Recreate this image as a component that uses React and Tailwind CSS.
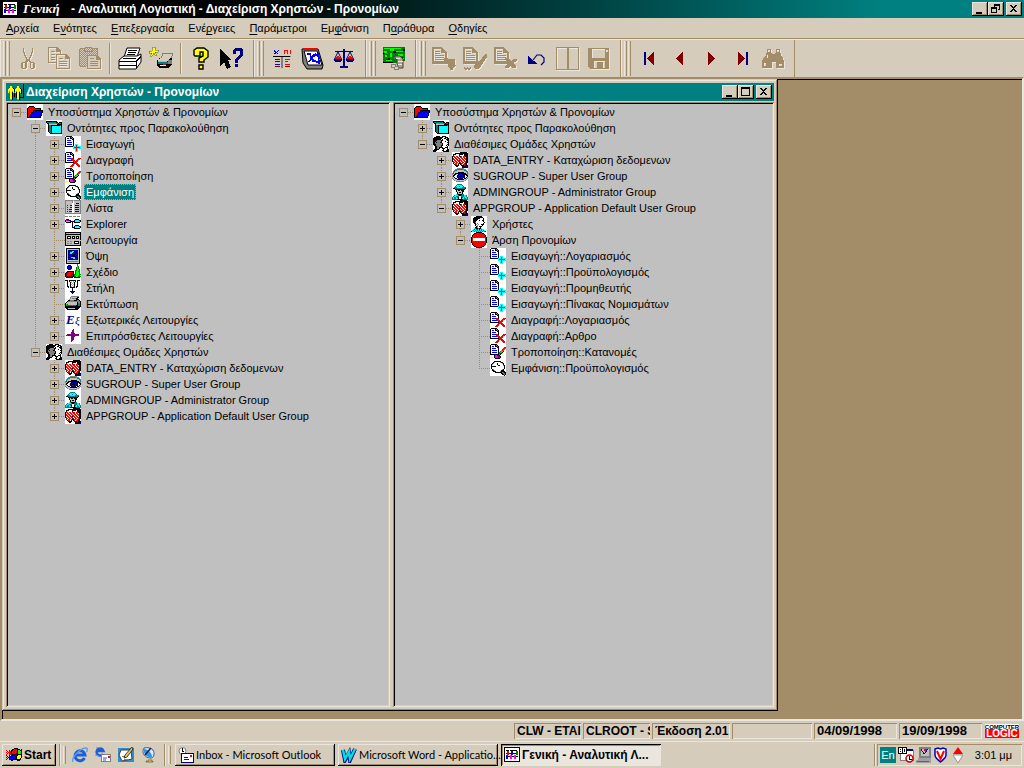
import clsx from 'clsx';

const COLORS = {
  k: '#000000', w: '#ffffff', r: '#ff0000', b: '#0000ff', n: '#000080', c: '#00ffff', t: '#008080',
  g: '#808080', s: '#c0c0c0', y: '#ffff00', m: '#ff00ff', p: '#800080', e: '#008000', l: '#00ff00',
  d: '#800000', o: '#a28d68', i: '#eae6dd',
};

// Draws a small bitmap, one character per pixel
const Pixels = ({ rows, x = 0, y = 0 }) => (
  <g>
    {rows.map((row, ry) =>
      [...row.matchAll(/([a-z])\1*/g)].map((run) => (
        <rect key={ry + '-' + run.index} x={x + run.index} y={y + ry} width={run[0].length} height="1" fill={COLORS[run[1]]} />
      ))
    )}
  </g>
);

const Svg16 = ({ children, bg }) => (
  <svg width="16" height="16" viewBox="0 0 16 16" shapeRendering="crispEdges" className="block shrink-0" aria-hidden="true">
    {bg && <rect width="16" height="16" fill={bg} />}
    {children}
  </svg>
);

const Svg24 = ({ children }) => (
  <svg width="24" height="24" viewBox="0 0 24 24" shapeRendering="crispEdges" className="block" aria-hidden="true">
    {children}
  </svg>
);

const PAGE = [
  '.kkkkkk.',
  'kwwwwkgk',
  'kwbbwkkgk',
  'kwwwwwwkk',
  'kwbbbbwwk',
  'kwwwwwwwk',
  'kwbbbbbwk',
  'kwwwwwwwk',
  'kwbbbbbwk',
  'kwwwwwwwk',
  'kkkkkkkkk',
];

const BITMAPS = {
  folder: [
    '................',
    '................',
    '..kkkkk.........',
    '.krrrrrk........',
    'krrrrrrrkkkkkk..',
    'krrrrrrrrrrrrk..',
    'krrrrrkkkkkkkkkk',
    'krrrrrkbbbbbbbbk',
    'krrrkkbbbbbbbbbk',
    'krrrkbbbbbbbbbk.',
    'krrkbbbbbbbbbbk.',
    'krrkbbbbbbbbbbk.',
    'krkbbbbbbbbbbk..',
    'kkkkkkkkkkkkkk..',
    '................',
    '................',
  ],
  box: [
    '................',
    'kkkkkkkkkkk.....',
    'ktttttttttkk.kkk',
    '.kkgggggggttkttk',
    '..ksssssssskkkkk',
    '..kttkkkkkkkkktk',
    '..kttkccccccccck',
    '..kttkccccccccck',
    '..kttkccccccccck',
    '..kttkccccccccck',
    '..kttkccccccccck',
    '..kttkccccccccck',
    '...ktkccccccccck',
    '....kkkkkkkkkkkk',
    '................',
    '................',
  ],
  list: [
    'ggggggggsggggggg',
    'gssssssgwssssssg',
    'gssssssgwssssssg',
    'gsssssswwssnnnsg',
    'gsssssswwssssssg',
    'gspssbbwwsnnbnsg',
    'gsssssswwssssssg',
    'gspssbbwwsnnbnsg',
    'gsssssswwssssssg',
    'gspsbbbwwsnnnnsg',
    'gsssssswwssssssg',
    'gspsbbbwwsnnbnsg',
    'gsssssswwssssssg',
    'gggggggggggggggg',
    '................',
    '................',
  ],
  explorer: [
    'ggg.ggg.ggg.ggg.',
    '................',
    '................',
    '.kkk......kkkk..',
    'kmppkk...kcccckk',
    'kssssknnnkssssck',
    '.kkkkk.n.kkkkkk.',
    '.......n........',
    '.......n........',
    '.......n..kkkk..',
    '.......n.kcccckk',
    '.......nnkssssck',
    '.........kkkkkk.',
    '................',
    '................',
    '................',
  ],
  dialog: [
    'kkkkkkkkkkkkkkkk',
    'kcccccccccccccck',
    'kkkkkkkkkkkkkkkk',
    'kssssssssssssssk',
    'kskkkkskkkskkksk',
    'kskwwkskwkskwksk',
    'kskkkkskkkskkksk',
    'kssssssssssssssk',
    'ksssssssssssssss',
    'ksggsggsskkkkksk',
    'ksssssssskwwwksk',
    'ksggsggsskkkkksk',
    'kssssssssssssssk',
    'kkkkkkkkkkkkkkkk',
    '................',
    '................',
  ],
  view: [
    '.kkkkkkkkkkkkkk.',
    '.kssssssssssssk.',
    '.ksnnnnnnnbbnsk.',
    '.ksnnbbccnnnnsk.',
    '.ksnbcccbnnnnsk.',
    '.ksnbccnnnnbnsk.',
    '.ksnnbbkknnnnsk.',
    '.ksnnnnkkkbbnsk.',
    '.ksnbbnnkkkbnsk.',
    '.ksnnbcccckknsk.',
    '.ksnnnbbccnnnsk.',
    '.ksnnnnnnnnnnsk.',
    '.kssssssssssssk.',
    '.ksggggggggggsk.',
    '.kssssssssssssk.',
    '.kkkkkkkkkkkkkk.',
  ],
  shapes: [
    '............e...',
    '...nnn......e...',
    '..nbbnn.....le..',
    '..nbbbn....ele..',
    '..nbbnn....ele..',
    '...nnn.....elle.',
    '..........eelle.',
    '..kkkkkkk.ellee.',
    '.kdrrrrrk.ellle.',
    'kdrrrrddk.ellle.',
    'kdrrrrddkeelllee',
    'kdrrrrdrkelllle.',
    'kddddddkkeelleee',
    '.kkkkkkk.kkkkkk.',
    '................',
    '................',
  ],
  column: [
    'kkk.kkkkkkk.kkk.',
    '..k.kwcwcwk.k...',
    '..k..kcwck..k...',
    '..k..kwcwk..k...',
    '..k..kcwck..k...',
    '..k..kwcwk..k...',
    '..kk.kcwck.kk...',
    '...k.kkkkk.k....',
    '.......n........',
    '.......n........',
    '.......n........',
    '.....nnnnn......',
    '......nnn.......',
    '.......n........',
    '................',
    '................',
  ],
  printer: [
    '......gggggggg..',
    '.....gsssssskk..',
    '.....gsggggkk...',
    '....gsssssskkk..',
    '...kkggggkkkggk.',
    '..kggggggggggggk',
    '.ksssssssssskggk',
    'ksssssssssssktgk',
    'klrssssssssskttk',
    'kttttttttttkkttk',
    'kkkkkkkkkkkkkkkk',
    'kkkkkkkkkkkkkkk.',
    '.kkssssssskkkk..',
    '..kkkkkkkkkkk...',
    '................',
    '................',
  ],
  star: [
    '................',
    '........p.......',
    '.......pp.......',
    '.......pp.......',
    '......ppp.......',
    '......pppp......',
    '..pppppppppppp..',
    '.ppppppppppppp..',
    '......pppp......',
    '......ppp.......',
    '......ppp.......',
    '......ppp.......',
    '......pp........',
    '......p.........',
    '................',
    '................',
  ],
  people: [
    '...kkkk..kkkk...',
    '.kkkkkkkkkwwkkk.',
    'kkkkkkkkkwwkkwkk',
    'kkkkkkkkwkwwwkkk',
    'kkkkggggkkwwwwkk',
    'kkkgggggkwwwkwwk',
    'kkgkgggkkwwwwwkk',
    'kkgggggggkwwwwwk',
    'kkkggggggkwwwwkk',
    '.kkgggggkkwwwkwk',
    '..kkggggkwwwwwk.',
    '..kkggkkkkwwkkk.',
    '..kkggk..kkkwwk.',
    '.kkkkk....kwwwkk',
    'kkkk.....kkwwkkk',
    'kkk.......kkkkkk',
  ],
  group: [
    '........kkkkkkk.',
    '...kkkkkkkkkkkkk',
    '.kkkwwwkkkkwkkkk',
    '.kwwwwwkwwwwkkkk',
    'krrwrrwrkrwrrkkk',
    'kwrrwrrwrrwrrwkk',
    'krwrrwrrwrrwrrkk',
    'krrwrrwrrwrrwrkk',
    'kwrrwrrkrrwrrwkk',
    'krwrrwrrwrrwrrkk',
    '.rrwrrwkrwrrwrkk',
    '.kwrrwrkkrrwrkk.',
    '..krrwk.krwrrkk.',
    '...kkkk..kkkrkkk',
    '....kk....kkkknn',
    '..........knnnnn',
  ],
  eye: [
    '.....ggggggg....',
    '...ggttttttggg..',
    '..gttsssssssttg.',
    '.gtssssssssssstg',
    '.tsssskkkkkkssst',
    'gtskkkkkkkkkkkst',
    'gskkssnnbbnnkkkg',
    'skkwwnnbkkbnnwkk',
    'gkwwsnbkkkbnnwwk',
    'sskwwnnbbbbnnwks',
    'gsskkwnnnnnwkksg',
    '.gssskkkkkkkssg.',
    '..gssssssssssg..',
    '....gggggggg....',
    '................',
    '................',
  ],
  officer: [
    '.....ttttt......',
    '....tccccct.....',
    '...tccctccct....',
    '..tttccccctttt..',
    '.kkttttttttttk..',
    '...kkkkkkkkkk...',
    '....kskkskkk....',
    '....kssssskk....',
    '.....kskksk.....',
    '.....kssssk.....',
    '....ctkkkktt....',
    '..tccctkktttcct.',
    '.tcctttwwtttcct.',
    'tcttctkwwktctcct',
    'tcttcckwwkccttct',
    'tttttkkkkkkttttt',
  ],
  user: [
    '.....kkkkkk.....',
    '...kkkkkkkkk....',
    '..kkkkkkkwwwk...',
    '..kkkkkwwwwwk...',
    '..kkkkwwkwwkk...',
    '..kkkwwwwwwwk...',
    '..kkgwwwwwwwwk..',
    '...kkwgwwwwwk...',
    '....kgwgwwkkk...',
    '....kwgwwwwk....',
    '.....kgwkkk.....',
    '....kkgwwk......',
    '...ctkkgkkc.....',
    '..ctcttckctcc...',
    '.ctctctctctctc..',
    'kcctctctctctctk.',
  ],
  stop: [
    '.....kkkkkk.....',
    '...kkrrrrrrkk...',
    '..krrrrrrrrrrk..',
    '.krrrrrrrrrrrrk.',
    '.krrrrrrrrrrrrk.',
    'krrrrrrrrrrrrrrk',
    'krwwwwwwwwwwwwrk',
    'krwwwwwwwwwwwwrk',
    'krwwwwwwwwwwwwrk',
    'krrrrrrrrrrrrrrk',
    'krrrrrrrrrrrrrrk',
    '.krrrrrrrrrrrrk.',
    '.krrrrrrrrrrrrk.',
    '..krrrrrrrrrrk..',
    '...kkrrrrrrkk...',
    '.....kkkkkk.....',
  ],
  lens: [
    '................',
    '....kkkkkkk.....',
    '...kgwwwwwgkk...',
    '..kgwwwkwwwwgk..',
    '.kgwwwwkwwwwwk..',
    '.kwwwwwwkkwwwgk.',
    '.kkkkkwwwwwwwwk.',
    '.kwwwwwwwwwwwwk.',
    '.kwwwwwwwwwwwwk.',
    '..kgwwwwwwwwgk..',
    '..kkgwwwwwwkkk..',
    '...kkkwwwwgkkkk.',
    '.....kkkkkkkgtkk',
    '...........kkgtk',
    '............kkgk',
    '..............k.',
  ],
};

const DocIcon = ({ kind }) => (
  <Svg16 bg="#ffffff">
    <Pixels rows={PAGE} x={0} y={0} />
    {kind === 'add' && (
      <>
        <path d="M8 10h8v3H8z M10 8h3v8h-3z" fill="#00ffff" />
        <path d="M9 11h6v1H9z M11 9h1v6h-1z" fill="#ff0000" />
      </>
    )}
    {kind === 'delete' && (
      <Pixels
        x={5}
        y={6}
        rows={['.rr.....rrr', '.rrr...rrr.', '..rrr.rrc..', '...rrrrr...', '....rrr....', '...rrrrr...', '..rrc.rrr..', '.rrr...rrr.', 'rrr.....rr.']}
      />
    )}
    {kind === 'edit' && (
      <Pixels
        y={3}
        rows={[
          '..............rr',
          '.............rrg',
          '............rrg.',
          '...........lrg..',
          '..........ellk..',
          '.........elgk...',
          '........kekk....',
          '.....kkkkgk.....',
          '.y..kmmppk......',
          '....kmmmppk.....',
          'yyy.kmmmppk.....',
          '.y...kkkkk......',
        ]}
      />
    )}
  </Svg16>
);

const TreeIcon = ({ name }) => {
  if (name === 'add' || name === 'delete' || name === 'edit') return <DocIcon kind={name} />;
  if (name === 'external') {
    return (
      <Svg16 bg="#ffffff">
        <text x="1" y="12" fontSize="13" fontStyle="italic" fontWeight="bold" fontFamily="Liberation Serif, serif" fill="#000080">E</text>
        <text x="10" y="12" fontSize="11" fontStyle="italic" fontFamily="Liberation Serif, serif" fill="#000080">ξ</text>
      </Svg16>
    );
  }
  return (
    <Svg16 bg="#ffffff">
      <Pixels rows={BITMAPS[name]} />
    </Svg16>
  );
};

const groups = (last) => [
  { label: 'DATA_ENTRY - Καταχώριση δεδομενων', icon: 'group', closed: true },
  { label: 'SUGROUP - Super User Group', icon: 'eye', closed: true },
  { label: 'ADMINGROUP - Administrator Group', icon: 'officer', closed: true },
  last,
];

const entityTree = {
  label: 'Υποσύστημα Χρηστών & Προνομίων',
  icon: 'folder',
  children: [
    {
      label: 'Οντότητες προς Παρακολούθηση',
      icon: 'box',
      children: [
        { label: 'Εισαγωγή', icon: 'add', closed: true },
        { label: 'Διαγραφή', icon: 'delete', closed: true },
        { label: 'Τροποποίηση', icon: 'edit', closed: true },
        { label: 'Εμφάνιση', icon: 'lens', closed: true, selected: true },
        { label: 'Λίστα', icon: 'list', closed: true },
        { label: 'Explorer', icon: 'explorer', closed: true },
        { label: 'Λειτουργία', icon: 'dialog' },
        { label: 'Όψη', icon: 'view', closed: true },
        { label: 'Σχέδιο', icon: 'shapes', closed: true },
        { label: 'Στήλη', icon: 'column', closed: true },
        { label: 'Εκτύπωση', icon: 'printer' },
        { label: 'Εξωτερικές Λειτουργίες', icon: 'external', closed: true },
        { label: 'Επιπρόσθετες Λειτουργίες', icon: 'star', closed: true },
      ],
    },
    {
      label: 'Διαθέσιμες Ομάδες Χρηστών',
      icon: 'people',
      children: groups({ label: 'APPGROUP - Application Default User Group', icon: 'group', closed: true }),
    },
  ],
};

const groupTree = {
  label: 'Υποσύστημα Χρηστών & Προνομίων',
  icon: 'folder',
  children: [
    { label: 'Οντότητες προς Παρακολούθηση', icon: 'box', closed: true },
    {
      label: 'Διαθέσιμες Ομάδες Χρηστών',
      icon: 'people',
      children: groups({
        label: 'APPGROUP - Application Default User Group',
        icon: 'group',
        children: [
          { label: 'Χρήστες', icon: 'user', closed: true },
          {
            label: 'Άρση Προνομίων',
            icon: 'stop',
            children: [
              { label: 'Εισαγωγή::Λογαριασμός', icon: 'add' },
              { label: 'Εισαγωγή::Προϋπολογισμός', icon: 'add' },
              { label: 'Εισαγωγή::Προμηθευτής', icon: 'add' },
              { label: 'Εισαγωγή::Πίνακας Νομισμάτων', icon: 'add' },
              { label: 'Διαγραφή::Λογαριασμός', icon: 'delete' },
              { label: 'Διαγραφή::Αρθρο', icon: 'delete' },
              { label: 'Τροποποίηση::Κατανομές', icon: 'edit' },
              { label: 'Εμφάνιση::Προϋπολογισμός', icon: 'lens' },
            ],
          },
        ],
      }),
    },
  ],
};

// One 19px column of the dotted guide lines
const Guide = ({ up, down, across }) => (
  <svg width="19" height="16" viewBox="0 0 19 16" shapeRendering="crispEdges" className="block shrink-0" aria-hidden="true">
    <g stroke="#a28d68" strokeDasharray="1 1">
      {up && <path d="M8.5 0V8" />}
      {down && <path d="M8.5 8V16" />}
      {across && <path d="M8 8.5H19" />}
    </g>
  </svg>
);

const Expander = ({ open, up, down, label }) => (
  <button type="button" aria-label={(open ? 'Collapse ' : 'Expand ') + label} className="block shrink-0">
    <svg width="19" height="16" viewBox="0 0 19 16" shapeRendering="crispEdges" className="block">
      <g stroke="#a28d68" fill="none">
        {up && <path d="M8.5 0V4" strokeDasharray="1 1" />}
        {down && <path d="M8.5 13V16" strokeDasharray="1 1" />}
        <path d="M13 8.5H19" strokeDasharray="1 1" />
        <rect x="4.5" y="4.5" width="8" height="8" />
      </g>
      <path d={open ? 'M6 8h5v1H6z' : 'M6 8h5v1H6z M8 6h1v5H8z'} fill="#000" />
    </svg>
  </button>
);

const TreeNode = ({ node, rails = [], isRoot, isLast }) => {
  const hasBox = node.closed || node.children;
  return (
    <li role="treeitem" aria-selected={!!node.selected}>
      <div className="flex h-4 items-center">
        {rails.map((on, i) => <Guide key={i} up={on} down={on} />)}
        {hasBox ? (
          <Expander open={!!node.children} up={!isRoot} down={!isLast} label={node.label} />
        ) : (
          <Guide up down={!isLast} across />
        )}
        <TreeIcon name={node.icon} />
        <span
          className={clsx(
            'ml-[3px] h-4 px-[2px] text-[11px] leading-4 whitespace-nowrap',
            node.selected ? 'bg-[#008080] text-white outline-1 -outline-offset-1 outline-dotted outline-[#ff7f7f]' : 'text-black'
          )}
        >
          {node.label}
        </span>
      </div>
      {node.children && (
        <ul role="group">
          {node.children.map((child, i) => (
            <TreeNode key={child.label} node={child} rails={[...rails, !isLast]} isLast={i === node.children.length - 1} />
          ))}
        </ul>
      )}
    </li>
  );
};

const TreePane = ({ tree, name, className }) => (
  <div
    className={clsx(
      'min-w-0 overflow-hidden bg-[#c0c0c0] p-[2px] shadow-[inset_1px_1px_#a28d68,inset_-1px_-1px_#eae6dd,inset_2px_2px_#000,inset_-2px_-2px_#d5ccbb]',
      className
    )}
  >
    <ul role="tree" aria-label={name}>
      <TreeNode node={tree} isRoot isLast />
    </ul>
  </div>
);

const CAPTION = {
  minimize: 'M4 10h6v2H4z',
  maximize: 'M3 2h9v9H3z M4 4v6h7V4z',
  restore: 'M6 2h6v6h-2V7h1V4H7v1H6z M3 5h6v6H3z M4 7v3h4V7z',
  close: 'M4 3h2v1h1v1h1V4h1V3h2v1h-1v1H9v1H8v1h1v1h1v1h1v1H9V9H8V8H7v1H6v1H4V9h1V8h1V7h1V6H6V5H5V4H4z',
};

const CaptionButton = ({ kind, className }) => (
  <button
    type="button"
    aria-label={kind}
    className={clsx('h-[14px] w-4 bg-[#d5ccbb] shadow-[inset_-1px_-1px_#000,inset_1px_1px_#eae6dd,inset_-2px_-2px_#a28d68]', className)}
  >
    <svg width="16" height="14" viewBox="0 0 16 14" shapeRendering="crispEdges" className="block">
      <path d={CAPTION[kind]} fillRule="evenodd" />
    </svg>
  </button>
);

const AppMark = () => (
  <Svg16>
    <Pixels
      rows={[
        'kkkkkkkkkkkkkkkk',
        'kwwwwwwwwwwwwwwk',
        'kwwwwwwwwwwwwwwk',
        'kwkkkwkkkkkkkwwk',
        'kwwrrwwbbwwweewk',
        'kwwrrwwbbwwweewk',
        'kwkrrkkbbkkkeewk',
        'kwwrrwwbbwwweewk',
        'kwbbwwmmwwmmwwwk',
        'kwbbkkmmkkmmkkwk',
        'kwbbwwmmwwmmwwwk',
        'kwbbwwmmwwmmwwwk',
        'kwwwwwwwwwwwwwwk',
        'kwwwwwwwwwwwwwwk',
        'kkkkkkkkkkkkkkkk',
        '................',
      ]}
    />
  </Svg16>
);

const MENU = [
  ['', 'Α', 'ρχεία'],
  ['Ε', 'ν', 'ότητες'],
  ['', 'Ε', 'πεξεργασία'],
  ['Ενέ', 'ρ', 'γειες'],
  ['', 'Π', 'αράμετροι'],
  ['Εμ', 'φ', 'άνιση'],
  ['Π', 'α', 'ράθυρα'],
  ['', 'Ο', 'δηγίες'],
];

// Greyed glyphs get a light copy one pixel down and right
const Disabled = ({ d, over = '' }) => (
  <Svg24>
    <g fill="#eae6dd" transform="translate(1 1)">
      <path d={d} fillRule="evenodd" />
      <path d={over} />
    </g>
    <path d={d} fill="#a28d68" fillRule="evenodd" />
    <path d={over} fill="#a28d68" />
  </Svg24>
);

const GREY_PAGE = 'M0 0h10v1h1v1h1v1h1v1h1v1h1v9h2v3H0z M2 2v12h11V6h-4V2z';
const GREY_LINES = 'M3 4h5v1H3z M3 6h5v1H3z M3 8h9v1H3z M3 10h9v1H3z M3 12h9v1H3z';

const TOOLS = {
  cut: (
    <Disabled d="M7 1h1v4h1v3h1v2h1v2h2v-2h1V8h1V5h1V1h1v5h-1v3h-1v2h-1v3h1v1h3v1h1v5h-1v1h-3v-1h-1v-6h-1v-1h-1v1h-1v6h-1v1H6v-1H5v-5h1v-1h3v-1h1v-3H9V9H8V6H7z M7 16v5h2v-5z M15 16v5h2v-5z" />
  ),
  copy: (
    <Disabled d="M1 0h9l4 4v3h5l4 4v11H9v-6H1z M2 1v14h7V7h4V5H9V1z M4 4h4v1H4z M4 7h4v1H4z M4 10h4v1H4z M4 12h4v1H4z M10 8v13h12v-9h-4V8z M12 11h4v1h-4z M12 14h8v1h-8z M12 16h8v1h-8z M12 18h8v1h-8z" />
  ),
  paste: (
    <Svg24>
      <defs>
        <pattern id="dither" width="2" height="2" patternUnits="userSpaceOnUse">
          <path d="M0 0h1v1H0z M1 1h1v1H1z" fill="#a28d68" />
        </pattern>
      </defs>
      <path d="M2 2h5V0h7v2h5v18H2z" fill="url(#dither)" />
      <path d="M2 1h5V0h7v1h5l1 1v6h-1V2h-4v3H6V2H2v17h6v1H2l-1-1V2z M7 1v3h7V1z" fill="#a28d68" fillRule="evenodd" />
      <path d="M9 9h11l4 4v10H9z" fill="#eae6dd" />
      <path d="M9 8h10l4 4v10H9z" fill="#a28d68" />
      <path d="M10 9h8v4h4v8H10z" fill="#d5ccbb" />
      <path d="M12 11h4v1h-4z M12 14h8v1h-8z M12 16h8v1h-8z M12 18h8v1h-8z" fill="#a28d68" />
    </Svg24>
  ),
  print: (
    <Svg24>
      <path d="M9 1h13l-3 9H6z" fill="#fff" stroke="#000" shapeRendering="auto" />
      <path d="M10 3h9v1h-9z M10 5h8v1h-8z M9 7h8v1H9z" />
      <path d="M1 13l5-4h13l4-2v8l-5 7H1z" fill="#fff" stroke="#000" shapeRendering="auto" />
      <path d="M5 11h13v1H5z M1 14h17v1H1z M1 18h17v1H1z M18 14l5-6v2l-4 5v6h-1z" />
      <path d="M12 16h4v1h-4z" fill="#ffff00" />
    </Svg24>
  ),
  quickPrint: (
    <Svg24>
      <path d="M4 0h2v3h3v2H6l2 3H6L5 6 3 9H1l2-3H0V4h3z" fill="#ffff00" stroke="#000" strokeWidth=".3" />
      <path d="M14 6h10l-2 6H12z" fill="#d5ccbb" stroke="#808080" />
      <path d="M8 13l3-2h12v7l-4 3h-9l-2-3z" />
      <path d="M9 12l3-1h9l-2 3H9z" fill="#d5ccbb" />
      <path d="M9 14h9v1H9z" fill="#00ffff" />
      <path d="M9 15h10v2H9z" fill="#008080" />
      <path d="M19 13h4v4h-4z" fill="#808080" />
      <path d="M11 18h6v1h-6z" fill="#fff" />
      <path d="M14 17h3v1h-3z" fill="#ff0000" />
    </Svg24>
  ),
  help: (
    <Svg24>
      <path
        d="M8 1h7l4 3v6l-4 3v2h-5v-4l4-2V5h-3v4H6L5 8V3zM10 18h4v4h-4z"
        fill="#ffff00"
        stroke="#000"
        strokeWidth="1.4"
        shapeRendering="auto"
      />
    </Svg24>
  ),
  whatsThis: (
    <Svg24>
      <path d="M0 2l12 11H8l3 7-4 2-3-7-4 4z" />
      <path d="M15 1h6l2 2v6l-5 4v3h-3v-4l5-4V4h-4v3h-3V3z M15 17h3v3h-3z" fill="#000080" />
    </Svg24>
  ),
  fraction: (
    <Svg24>
      <path d="M4 3h1v1h1v1h1V4h1V3h1v1H8v1H7v1h1v1H7V6H6v1H4V6h1V5H4z" fill="#0000ff" />
      <path d="M14 3h4v4h-1V4h-2v3h-1z M20 3h1v4h-1z" fill="#ff0000" />
      <path d="M3 9h18v1H3z M11 10h2v11h-2z" fill="#808080" />
      <path d="M3 9h17v1H3z" />
      <path d="M5 12h5v1H5z M5 14h5v1H5z M5 17h5v1H5z" fill="#0000ff" />
      <path d="M15 12h5v1h-5z M15 14h3v1h-3z M15 17h5v1h-5z" fill="#ff0000" />
      <path d="M15 19h5v1h-5z M5 19h5v1H5z" fill="#800000" />
    </Svg24>
  ),
  ledger: (
    <Svg24>
      <path d="M1 2h16l5 16-1 4H6L2 16z" fill="#808080" stroke="#000" shapeRendering="auto" />
      <path d="M2 1h14v2H2z" fill="#ff0000" />
      <path d="M3 4h13l5 14H7z" fill="#fff" stroke="#000" shapeRendering="auto" />
      <path d="M6 7h3l3 8M13 7l-5 8M11 10l6-3 1 9-6-3M14 7l4 2" fill="none" stroke="#0000ff" strokeWidth="1.6" />
    </Svg24>
  ),
  scales: (
    <Svg24>
      <path d="M11 2h2v18h-2z M3 4h18v1H3z M8 19h8v2H8z M2 12h8v2H2z M14 12h8v2h-8z" fill="#000080" />
      <path d="M6 5l-4 8M6 5l4 8M18 5l-4 8M18 5l4 8" stroke="#000080" shapeRendering="auto" />
      <path d="M6 8l3 4H3z M18 8l3 4h-6z" fill="#ff0000" />
      <path d="M3 14h6v1H3z M15 14h6v1h-6z" />
    </Svg24>
  ),
  money: (
    <Svg24>
      <path d="M1 0h22v14h-2v2H1z" fill="#008000" />
      <path d="M2 1h17v1H2z M2 4h3v2H2z M8 2h4v2H8z M14 4h7v1h-7z M3 8h2v2H3z M8 6h2v4H8z M16 7h5v2h-5z M4 13h6v1H4z M12 10h1v2h-1z M19 11h3v1h-3z" fill="#00ff00" />
      <path d="M1 6h2v1H1z M11 4h3v2h-3z M6 11h2v2H6z M18 10h3v1h-3z M4 12h2v1H4z M1 15h10v1H1z M21 2h2v2h-2z" />
      <path d="M13 9h5l3 3v9h-4l-2-4v-5h-2z" fill="#b0a48e" stroke="#404040" shapeRendering="auto" />
      <path d="M14 11h4v1h-4z M16 14h5v1h-5z M16 17h4v1h-4z" fill="#eae6dd" />
      <path d="M9 17h4v2h3v3h-4v-2H9z" fill="#d5ccbb" stroke="#808080" />
    </Svg24>
  ),
  insert: <Disabled d={GREY_PAGE} over={GREY_LINES + 'M12 11h4v1h7v6h1v1h-1v1h-1v1h-1v2h-3v-2h-1v-1h-1v-3h-4z'} />,
  modify: <Disabled d={GREY_PAGE} over={GREY_LINES + 'M22 7h2v3l-6 9-3 3h-3l-1-3 3-4h2z M1 20h1v1h2v-1h1v1h2v-1h1v2H7v1H5v-1H4v1H2v-1H1z'} />,
  remove: <Disabled d={GREY_PAGE} over={GREY_LINES + 'M11 11h3l3 3 2-2h4v2l-4 2 3 3v2h-3l-3-2-2 2h-3v-2l3-3-3-3z'} />,
  undo: (
    <Svg24>
      <path d="M3 9v8h9l-3-3-2-1-1-1-2-2z" fill="#000080" />
      <path d="M8 13l4-5h4l3 3v4l-3 3" fill="none" stroke="#000080" strokeWidth="1.2" shapeRendering="auto" />
    </Svg24>
  ),
  panes: (
    <Svg24>
      <path d="M1.500 1.500h22v22h-22z M12.500 2v22" fill="none" stroke="#eae6dd" />
      <path d="M.500 .500h11v22h-11z M12.500 .500h10v22h-10z" fill="none" stroke="#a28d68" />
    </Svg24>
  ),
  save: <Disabled d="M1 1h21v21H3l-2-2z M5 2v9h13V2z M7 14v7h3v-6h6v6h2v-7z M19 3v2h2V3z" />,
  first: (
    <Svg24>
      <path d="M7 5h2v13H7z" fill="#000080" />
      <path d="M17 5v13l-7-6.500z" fill="#800000" />
    </Svg24>
  ),
  previous: (
    <Svg24>
      <path d="M15 5v13l-7-6.500z" fill="#800000" />
    </Svg24>
  ),
  next: (
    <Svg24>
      <path d="M9 5v13l7-6.500z" fill="#800000" />
    </Svg24>
  ),
  last: (
    <Svg24>
      <path d="M8 5v13l7-6.500z" fill="#800000" />
      <path d="M16 5h2v13h-2z" fill="#000080" />
    </Svg24>
  ),
  find: (
    <Disabled d="M6 2h4v4h1v1h3V6h1V2h4v4h1v2l2 3 1 4v6h-8v-6h-4v6H1v-6l1-4 3-3V6h1z M7 3v2h2V3z M16 3v2h2V3z M3 16v3h2v-3z M6 8v3h1V8z M18 17v2h3v-2z" />
  ),
};

const Separator = () => (
  <div className="mx-1 my-[3px] w-px self-stretch bg-[#a28d68] shadow-[1px_0_#eae6dd]" />
);

const Grip = () => <div className="w-[3px] border-r border-l border-r-[#a28d68] border-l-[#eae6dd]" />;

const Band = ({ tools }) => (
  <div className="flex border-r border-l border-r-[#a28d68] border-l-[#eae6dd] pr-[6px] pl-[2px]">
    <div className="my-px mr-[2px] flex gap-px">
      <Grip />
      <Grip />
    </div>
    {tools.map((tool, i) =>
      tool === '|' ? (
        <Separator key={i} />
      ) : (
        <button key={i} type="button" aria-label={tool} className="flex w-[31px] items-center justify-center">
          {TOOLS[tool]}
        </button>
      )
    )}
  </div>
);

const BANDS = [
  ['cut', 'copy', 'paste', '|', 'print', 'quickPrint', '|', 'help', 'whatsThis'],
  ['fraction', 'ledger', 'scales'],
  ['money'],
  ['insert', 'modify', 'remove', 'undo', 'panes', 'save'],
  ['first', 'previous', 'next', 'last', 'find'],
];

const StatusPanel = ({ children, className }) => (
  <div
    className={clsx(
      'h-4 overflow-hidden pl-[3px] leading-4 font-bold whitespace-nowrap shadow-[inset_1px_1px_#a28d68,inset_-1px_-1px_#eae6dd]',
      className
    )}
  >
    {children}
  </div>
);

const TaskButton = ({ icon, children, active }) => (
  <button
    type="button"
    className={clsx(
      'flex h-[22px] w-40 items-center gap-[2px] pl-[3px] text-left whitespace-nowrap',
      active
        ? 'bg-[#eae6dd] text-[12px] font-bold shadow-[inset_1px_1px_#000,inset_-1px_-1px_#eae6dd,inset_2px_2px_#a28d68]'
        : "bg-[#d5ccbb] font-['Lato',sans-serif] text-[11px] shadow-[inset_-1px_-1px_#000,inset_1px_1px_#eae6dd,inset_-2px_-2px_#a28d68]"
    )}
  >
    {icon}
    <span>{children}</span>
  </button>
);

const InternetIcon = () => (
  <svg width="16" height="16" viewBox="0 0 16 16" className="block" aria-hidden="true">
    <path d="M12.500 11A5 5 0 1 1 13 8H4" fill="none" stroke="#1e5fd8" strokeWidth="3" />
    <path d="M1 15C-1 11 8 1 14 1c2 0 1.500 2 .5 4" fill="none" stroke="#5a9cf0" strokeWidth="1.300" />
  </svg>
);

const MailIcon = () => (
  <svg width="16" height="16" viewBox="0 0 16 16" className="block" aria-hidden="true">
    <path d="M8 7A3.500 3.500 0 1 1 8.500 4H2" fill="none" stroke="#1e5fd8" strokeWidth="2.500" />
    <rect x="6.500" y="7.500" width="9" height="7" fill="#fff" stroke="#808080" />
    <path d="M8 11h4M8 13h3" stroke="#1e5fd8" />
    <path d="M13 9h2v2h-2z" fill="#ff0000" />
    <path d="M1 1l4-1M0 8l4 1" stroke="#5a9cf0" />
  </svg>
);

const DesktopIcon = () => (
  <Svg16>
    <path d="M0 1h16v14H0z" fill="#2f8fc8" />
    <path d="M3 3l10 0 1 9-10 2-3-6z" fill="#fff" stroke="#404040" shapeRendering="auto" />
    <path d="M4 9h4v1H4z M6 12h5v1H6z" fill="#808080" />
    <path d="M14 0L7 8l-1 3 3-1 6-8z" fill="#f0c060" stroke="#000" strokeWidth=".7" shapeRendering="auto" />
  </Svg16>
);

const ChannelIcon = () => (
  <svg width="16" height="16" viewBox="0 0 16 16" className="block" aria-hidden="true">
    <path d="M3 1C0 6 4 11 10 11c3 0 4-5 2-8-2-2-6-3-9-2z" fill="#d8ecfa" stroke="#306090" />
    <path d="M3 2c4 0 8 4 8 8-5 1-9-3-8-8z" fill="#3a90e0" />
    <path d="M4 8l6-7" stroke="#102060" strokeWidth="1.500" />
    <path d="M8 12v2H5v1h7v-1h-2v-2" fill="#f0d060" stroke="#604000" strokeWidth=".6" />
  </svg>
);

const StartIcon = () => (
  <Svg16>
    <Pixels
      y={1}
      rows={[
        '........kkkk....',
        '......kkrrrkkk.k',
        'r..r.kkrrrrkllkk',
        '.r.rrkrrrrrklllk',
        'r.rrrkrrrrrklllk',
        '.r.rrkrrrrkklllk',
        'r..rrkkkkkkkkkkk',
        'b..b.kkbbbkkyyyk',
        '.b.bbkbbbbkyyyyk',
        'b.bbbkbbbbkyyyyk',
        '.b.bbkbbbkkyyyk.',
        'b..bbkkkkkkkkkk.',
        '.....kk....kkk..',
      ]}
    />
  </Svg16>
);

const InboxIcon = () => (
  <Svg16>
    <circle cx="4.500" cy="4" r="3.500" fill="#fff" stroke="#808080" shapeRendering="auto" />
    <path d="M4 1v3h2" fill="none" stroke="#000" />
    <path d="M4 6h12v9H4z" fill="#fff" />
    <path d="M3 6h12v1H3z M3 6h1v9H3z M15 6h1v10H3v-1h12z" fill="#000080" />
    <path d="M12 8h2v2h-2z" fill="#ff0000" />
    <path d="M6 10h4v1H6z M6 12h5v1H6z" fill="#0000ff" />
  </Svg16>
);

const WordIcon = () => (
  <svg width="16" height="16" viewBox="0 0 16 16" className="block shrink-0" aria-hidden="true">
    <path d="M2 3l2 10 4-7 1 7 5-11" fill="none" stroke="#000080" strokeWidth="4" />
    <path d="M2 3l2 9 4-7 1 7 5-10" fill="none" stroke="#00e0e0" strokeWidth="2.500" />
  </svg>
);

const ScheduleIcon = () => (
  <Svg16>
    <path d="M2 3h13v10H2z" fill="#fff" stroke="#808080" />
    <path d="M0 0h9v7H0z" />
    <path d="M1 1h3v5H1z M5 1h3v5H5z" fill="#fff" />
    <path d="M2 2h1v1H2z M2 4h1v1H2z M6 2h1v3H6z M9 2h6v2H9z" fill="#000080" />
    <circle cx="11.500" cy="11.500" r="3.500" fill="#fff" stroke="#c00000" strokeWidth="1.500" shapeRendering="auto" />
    <path d="M11 9h1v3h2v1h-3z" />
  </Svg16>
);

const MonitorIcon = () => (
  <Svg16>
    <path d="M3 0h12v11H3z" fill="#808080" />
    <path d="M5 2h8v7H5z" fill="#c0c0c0" />
    <path d="M5 2l3 5 4-5" fill="none" stroke="#0000ff" />
    <path d="M8 2l1 4 2-4z" fill="#ff0000" />
    <path d="M2 11h13v2H2z M0 13h15v3H0z" fill="#a0a0a0" />
    <path d="M1 14h12v1H1z" fill="#606060" />
  </Svg16>
);

const ShieldIcon = () => (
  <svg width="13" height="16" viewBox="0 0 13 16" className="block" aria-hidden="true">
    <path d="M1 2l3-1 2.500 1L9 1l3 1v6c0 3-3 5-5.500 7C4 13 1 11 1 8z" fill="#fff" stroke="#0000c0" strokeWidth="1.500" />
    <path d="M3 4l3.500 8L10 4" fill="none" stroke="#ff0000" strokeWidth="2" />
  </svg>
);

const ArrowsIcon = () => (
  <svg width="10" height="16" viewBox="0 0 10 16" className="block" aria-hidden="true">
    <path d="M5 0l5 7H0z" fill="#ff0000" />
    <path d="M0 8h10l-5 8z" fill="#fff" stroke="#808080" strokeWidth=".8" />
  </svg>
);

const ToolbarEdge = () => (
  <>
    <div className="ml-[3px] w-px bg-[#a28d68] shadow-[1px_0_#eae6dd]" />
    <div className="my-[2px] ml-[3px] w-[3px] border-r border-l border-r-[#a28d68] border-l-[#eae6dd]" />
  </>
);

const App = () => {
  return (
    <div className="flex min-h-screen flex-col overflow-hidden bg-[#d5ccbb] font-['Liberation_Sans',Arial,sans-serif] text-[11px] text-black">
      {/* Application title */}
      <header className="flex h-[18px] items-center bg-linear-to-r from-black from-8% to-[#008080] to-86% pr-[2px] pl-[2px] text-white">
        <AppMark />
        <h1 className="ml-[5px] flex text-[12px] leading-4 font-bold whitespace-pre">
          <span className="w-12 font-['Liberation_Serif',serif] text-[13px] italic">Γενική</span>
          <span>- Αναλυτική Λογιστική - Διαχείριση Χρηστών - Προνομίων</span>
        </h1>
        <div className="ml-auto flex">
          <CaptionButton kind="minimize" />
          <CaptionButton kind="restore" />
          <CaptionButton kind="close" className="ml-[2px]" />
        </div>
      </header>

      {/* Menu */}
      <nav className="flex h-[21px] items-center gap-[14px] border-b border-[#a28d68] px-[6px]">
        {MENU.map(([before, key, after]) => (
          <button key={before + key + after} type="button" className="leading-4">
            {before}
            <u className="underline-offset-2">{key}</u>
            {after}
          </button>
        ))}
      </nav>

      {/* Toolbars */}
      <div className="flex h-[38px] border-t border-[#eae6dd]">
        {BANDS.map((tools) => <Band key={tools[0]} tools={tools} />)}
      </div>

      {/* Workspace */}
      <main className="flex flex-1 border-2 border-t-[#a28d68] border-r-[#eae6dd] border-b-[#eae6dd] border-l-[#a28d68] bg-[#a28d68] pb-2 shadow-[inset_1px_1px_#000]">
        <section className="mr-[244px] flex min-w-0 flex-1 flex-col bg-[#d5ccbb] p-1 shadow-[inset_-1px_-1px_#000,inset_1px_1px_#d5ccbb,inset_-2px_-2px_#a28d68,inset_2px_2px_#eae6dd]">
          <div className="flex h-[18px] items-center bg-[#008080] px-[2px] text-white">
            <Svg16>
              <Pixels
                rows={[
                  '..........tttttk',
                  '......tttttttttk',
                  '..yy..tttyyttttk',
                  '..yy..tttyyttttk',
                  '.yyyykttyyyykttk',
                  'yyyyyykyyyyyyktk',
                  'yyyyyykyyyyyyktk',
                  'yoyyoykyoyyoyktk',
                  'y.yyky.ykyykyktk',
                  '..yyk.k.kyyktktk',
                  '..yyk.k.kyyktttk',
                  '..yyk.k.kyyktttk',
                  '..yyk.k.kyyktttk',
                  '..yyk...kyykkkkk',
                  '..yyk....yyk....',
                  '..ook....ook....',
                ]}
              />
            </Svg16>
            <h2 className="ml-[2px] text-[12px] leading-4 font-bold">Διαχείριση Χρηστών - Προνομίων</h2>
            <div className="ml-auto flex">
              <CaptionButton kind="minimize" />
              <CaptionButton kind="maximize" />
              <CaptionButton kind="close" className="ml-[2px]" />
            </div>
          </div>
          <div className="mt-px flex flex-1">
            <TreePane tree={entityTree} name="Οντότητες" className="w-1/2" />
            <TreePane tree={groupTree} name="Ομάδες" className="ml-[3px] flex-1" />
          </div>
        </section>
      </main>

      {/* Status bar */}
      <footer className="flex h-5 items-center justify-end gap-[2px] pr-[5px]">
        <StatusPanel className="w-[67px] text-[12px]">CLW - ETAI</StatusPanel>
        <StatusPanel className="w-[67px] text-[12px]">CLROOT - S</StatusPanel>
        <StatusPanel className="w-[78px] text-[12px]">Έκδοση 2.01</StatusPanel>
        <StatusPanel className="w-20" />
        <StatusPanel className="w-[83px] text-[13px]">04/09/1998</StatusPanel>
        <StatusPanel className="w-[83px] text-[13px]">19/09/1998</StatusPanel>
        <svg width="34" height="14" viewBox="0 0 34 14" className="ml-px block" role="img" aria-label="Computer Logic">
          <rect width="34" height="14" fill="#ff0000" />
          <rect x="0" y="0" width="34" height="5" fill="#fff" />
          <text x="17" y="5" textAnchor="middle" fontSize="6" fontWeight="bold" fontFamily="Liberation Sans">COMPUTER</text>
          <text x="17" y="13" textAnchor="middle" fontSize="10" fontWeight="bold" fontFamily="Liberation Sans" fill="#fff">LOGIC</text>
        </svg>
      </footer>

      {/* Taskbar */}
      <div className="flex h-[27px] border-t border-[#eae6dd] px-[2px] py-[2px]">
        <button
          type="button"
          className="flex h-[22px] w-[54px] items-center gap-[2px] pl-1 text-[12px] font-bold shadow-[inset_-1px_-1px_#000,inset_1px_1px_#eae6dd,inset_-2px_-2px_#a28d68]"
        >
          <StartIcon />
          Start
        </button>
        <ToolbarEdge />
        <div className="ml-[6px] flex items-center gap-[7px]">
          <button type="button" aria-label="Internet Explorer"><InternetIcon /></button>
          <button type="button" aria-label="Outlook Express"><MailIcon /></button>
          <button type="button" aria-label="Show Desktop"><DesktopIcon /></button>
          <button type="button" aria-label="Channels"><ChannelIcon /></button>
        </div>
        <div className="ml-1 flex"><ToolbarEdge /></div>
        <div className="ml-1 flex gap-[3px]">
          <TaskButton icon={<InboxIcon />}>Inbox - Microsoft Outlook</TaskButton>
          <TaskButton icon={<WordIcon />}>Microsoft Word - Applicatio...</TaskButton>
          <TaskButton icon={<AppMark />} active>Γενική - Αναλυτική Λ...</TaskButton>
        </div>
        <div className="ml-auto w-px bg-[#a28d68] shadow-[1px_0_#eae6dd]" />
        <div className="ml-[2px] flex h-[22px] w-[145px] items-center gap-[2px] pl-[3px] shadow-[inset_1px_1px_#a28d68,inset_-1px_-1px_#eae6dd]">
          <span className="h-4 w-4 bg-[#008080] text-center leading-4 text-white">En</span>
          <ScheduleIcon />
          <MonitorIcon />
          <ShieldIcon />
          <div className="ml-1"><ArrowsIcon /></div>
          <time className="mr-[10px] ml-auto">3:01 μμ</time>
        </div>
      </div>
    </div>
  );
};

export default App;
